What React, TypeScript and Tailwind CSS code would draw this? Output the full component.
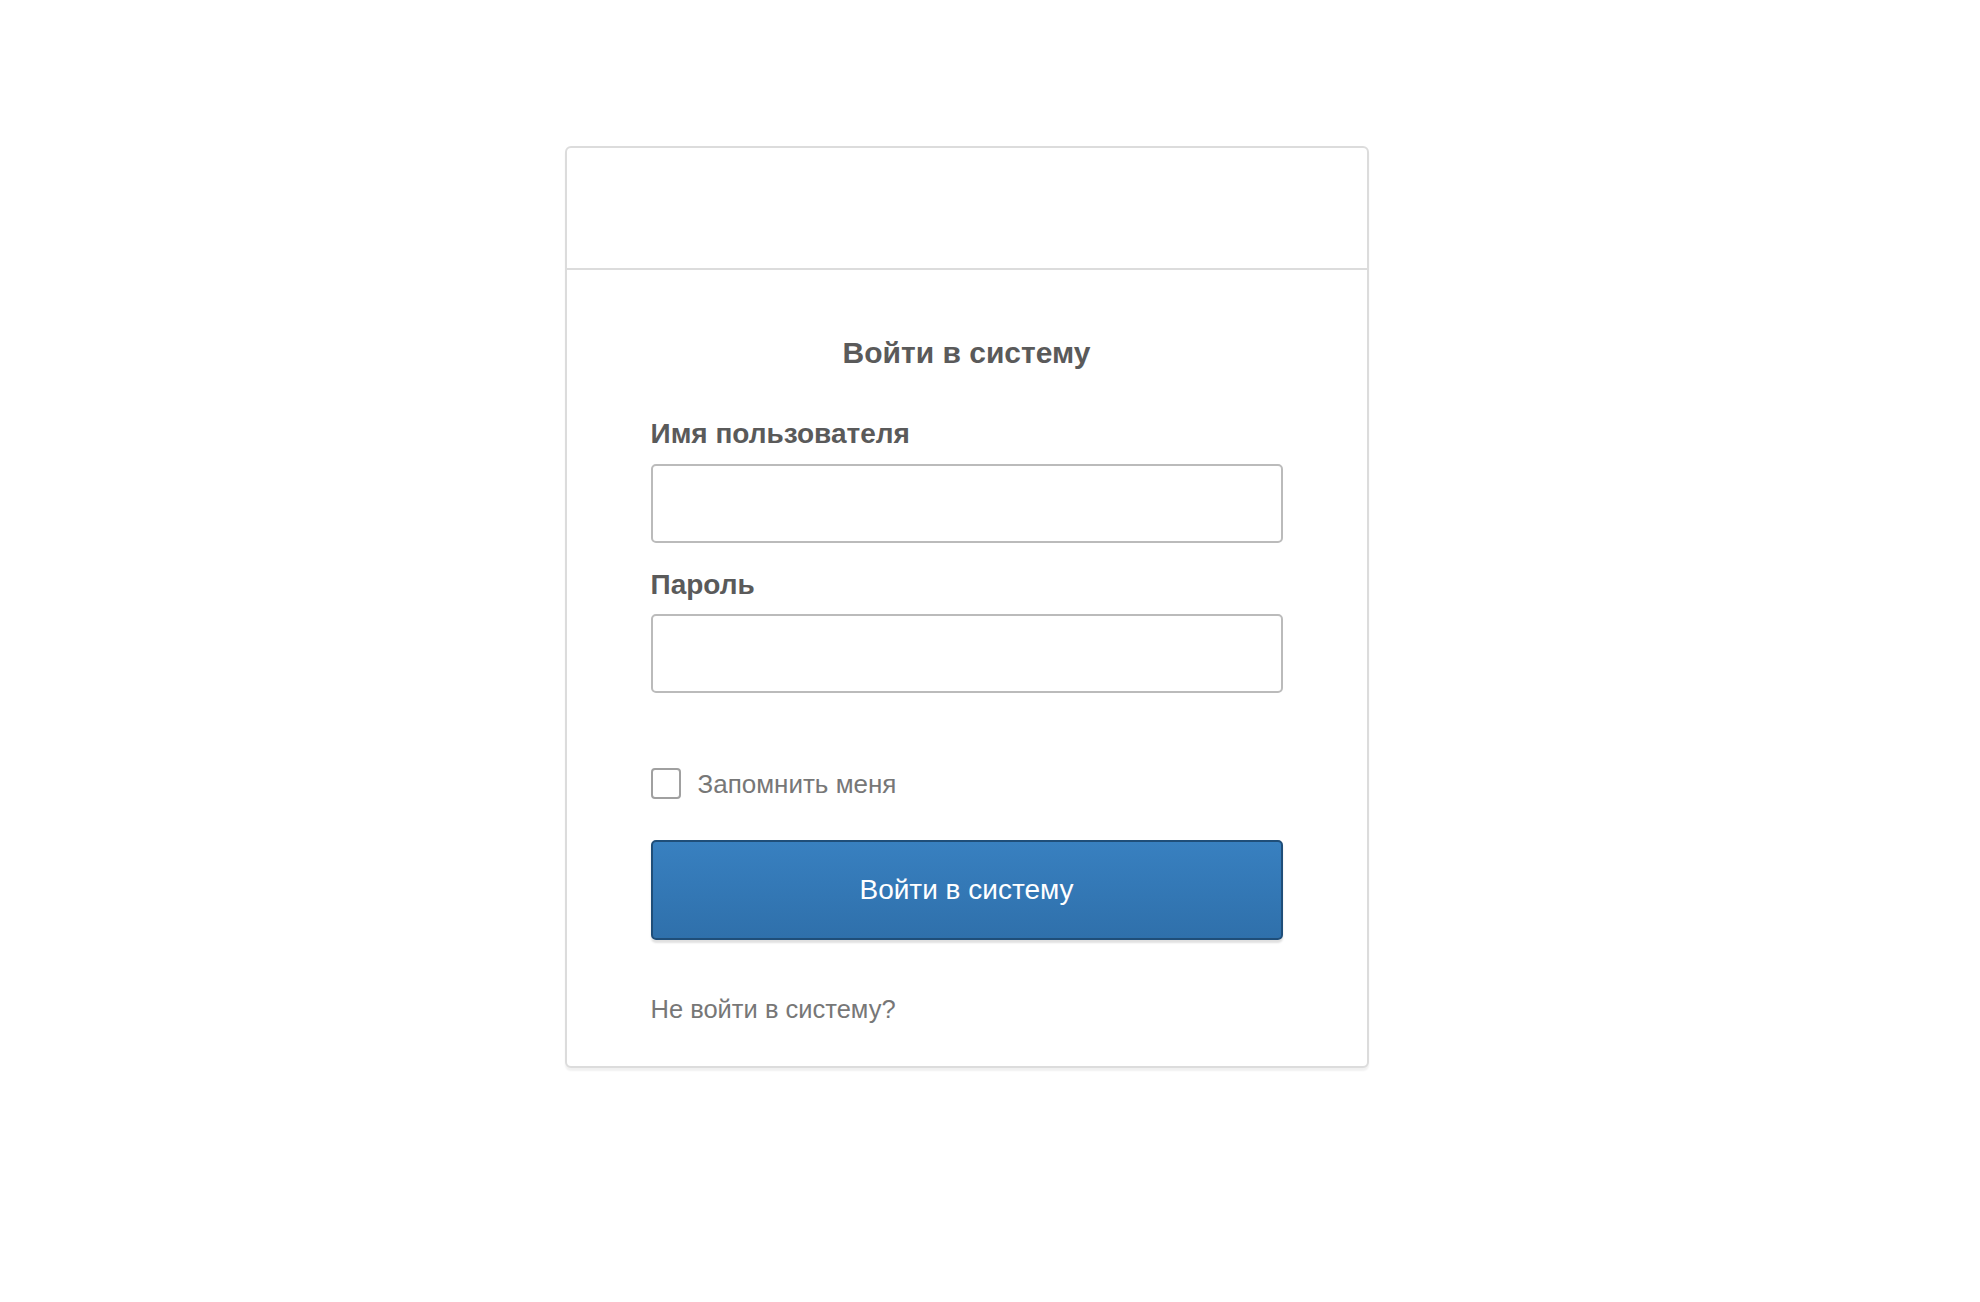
export default function App() {
  return (
    <div className="bg-white pt-[146px] pb-[230px] pr-[47px]" style={{ fontFamily: '"Liberation Sans", Arial, sans-serif' }}>
      <div className="mx-auto w-[804px] rounded-[6px] border-2 border-[#dcdcdc] bg-white shadow-[0_3px_2px_rgba(0,0,0,0.06)]">
        {/* Header (empty logo area) */}
        <div className="h-[122px] border-b-2 border-[#dcdcdc]"></div>

        <div className="px-[84px] pb-[42px]">
          <h1 className="mt-[68px] text-center text-[30px] font-bold leading-[30px] text-[#5a5a5a]">
            Войти в систему
          </h1>

          <form onSubmit={(e) => e.preventDefault()}>
            <label className="mt-[51px] block text-[28px] font-bold leading-[30px] text-[#5a5a5a]">
              Имя пользователя
            </label>
            <input
              type="text"
              className="mt-[15px] block h-[79px] w-full rounded-[5px] border-2 border-[#bbbbbb] bg-white px-3 text-[24px] outline-none"
            />

            <label className="mt-[27px] block text-[28px] font-bold leading-[30px] text-[#5a5a5a]">
              Пароль
            </label>
            <input
              type="password"
              className="mt-[14px] block h-[79px] w-full rounded-[5px] border-2 border-[#bbbbbb] bg-white px-3 text-[24px] outline-none"
            />

            <label className="mt-[75px] flex h-[31px] items-center gap-[17px]">
              <span className="block h-[31px] w-[30px] rounded-[4px] border-2 border-[#a0a0a0] bg-white"></span>
              <span className="text-[26px] leading-[30px] text-[#777777]">Запомнить меня</span>
            </label>

            <button
              type="submit"
              className="mt-[41px] block h-[100px] w-full rounded-[5px] border-2 border-[#1f4e79] bg-gradient-to-b from-[#3880c0] to-[#2f70ab] text-[28px] text-white shadow-[0_3px_2px_rgba(0,0,0,0.12)]"
            >
              Войти в систему
            </button>
          </form>

          <div className="mt-[54px] text-[25.5px] leading-[30px] text-[#777777]">Не войти в систему?</div>
        </div>
      </div>
    </div>
  );
}
